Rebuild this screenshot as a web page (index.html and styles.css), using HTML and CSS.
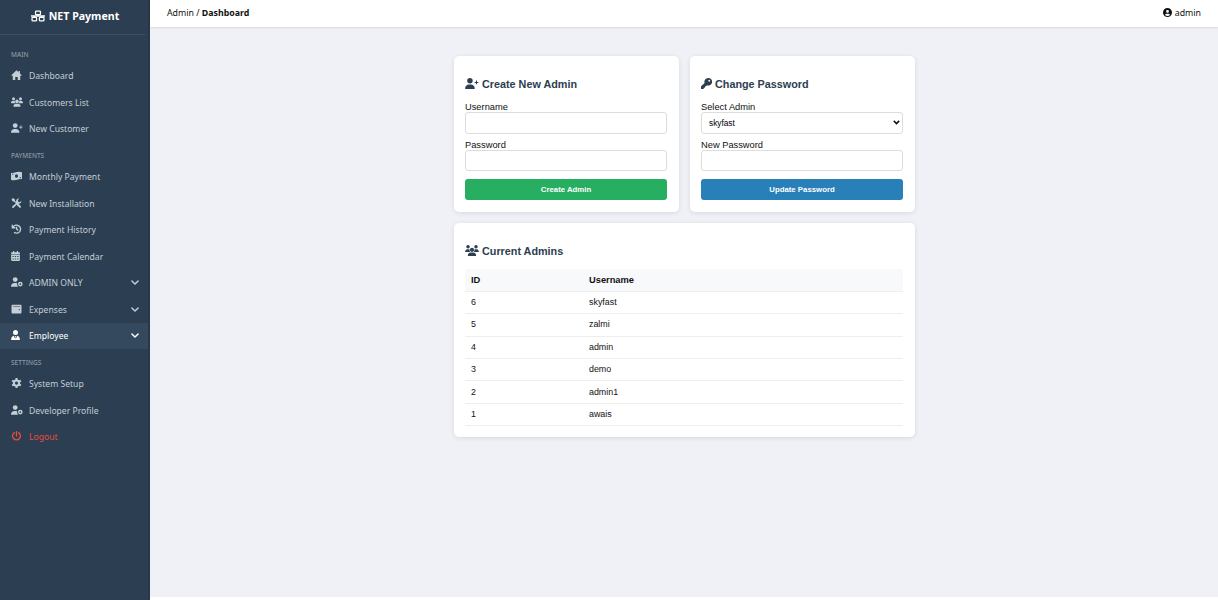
FILE: index.html
```html
<!DOCTYPE html>
<html lang="en">
<head>
  <meta charset="UTF-8">
  <meta name="viewport" content="width=device-width, initial-scale=1.0">
  <title>NET Payment - Admins</title>
  <link rel="stylesheet" href="styles.css">
</head>
<body>
  <svg class="sprite">
    <symbol id="i-network" viewBox="0 0 20 16"><g fill="none" stroke="currentColor" stroke-width="1.8"><rect x="6.500" y="1" width="7" height="5" rx="1"/><rect x="1.500" y="10" width="6.500" height="5" rx="1"/><rect x="12" y="10" width="6.500" height="5" rx="1"/><path d="M10 6v2M0 8h20M4.700 8v2M15.300 8v2"/></g></symbol>
    <symbol id="i-home" viewBox="0 0 16 16"><path d="M8 .5 0 7.800c-.3.600 0 1.200.6 1.200H2v6c0 .6.4 1 1 1h3v-5h4v5h3c.6 0 1-.4 1-1V9h1.400c.6 0 .9-.6.6-1.200L13.500 5.400V1.500h-2.300v1.900z"/></symbol>
    <symbol id="i-users" viewBox="0 0 20 16"><circle cx="4.200" cy="2.500" r="2.500"/><circle cx="15.800" cy="2.500" r="2.500"/><circle cx="10" cy="7" r="3"/><path d="M0 9.400C0 7.400 1.500 6 3.400 6h1.300c.6 0 1.200.1 1.700.4-.2 1.400.2 2.600 1.100 3.600H.6c-.4 0-.6-.2-.6-.6zM20 9.400C20 7.400 18.500 6 16.600 6h-1.300c-.6 0-1.200.1-1.700.4.2 1.400-.2 2.600-1.100 3.600h6.900c.4 0 .6-.2.6-.6zM4 15.200C4 12.900 5.900 11 8.200 11h3.600c2.300 0 4.200 1.900 4.200 4.200 0 .5-.3.8-.8.8H4.800c-.5 0-.8-.3-.8-.8z"/></symbol>
    <symbol id="i-user-plus" viewBox="0 0 20 16"><circle cx="7" cy="4" r="4"/><path d="M0 15.100C0 12 2.500 9.500 5.600 9.500h2.800c3.100 0 5.600 2.500 5.600 5.600 0 .5-.4.900-.9.900H.9c-.5 0-.9-.4-.9-.9zM15.750 9.250v-2h-2v-1.500h2v-2h1.500v2h2v1.500h-2v2z"/></symbol>
    <symbol id="i-money" viewBox="0 0 18 16"><path fill-rule="evenodd" d="M0 2.500c2 1.200 4.500.4 6.500-.2C10 1.200 14 0 18 2v11.500c-2-1.200-4.500-.4-6.500.2C8 14.800 4 16 0 14zM9 5C7.600 5 6.500 6.300 6.500 8S7.600 11 9 11s2.500-1.300 2.500-3S10.400 5 9 5zM2 4.500v2c1.100 0 2-.9 2-2zM16 11.500v-2c-1.100 0-2 .9-2 2z"/></symbol>
    <symbol id="i-tools" viewBox="0 0 16 16"><path d="M2.500 0 0 2.500l2 3h2l3 3-5.800 5c-.9.900-.1 2.500 1.200 2.400.5 0 .8-.2 1.100-.5L8 10.700l4.500 4.600c1.400 1.400 3.600-.8 2.300-2.300l-3.700-3.700c2.900.3 5.200-2.300 4.700-5.100l-2.500 2.400-2.600-.8-.6-2.500L12.500.8C9.500 0 7 2.500 7.500 5.200L7 6 5.500 4.500V2.200z"/></symbol>
    <symbol id="i-history" viewBox="0 0 16 16"><path d="M1.300 1v5h5M2.600 4.800A6.400 6.400 0 1 1 4 13.200M8.200 4.300V8l2.500 2.300" fill="none" stroke="currentColor" stroke-width="2.100"/></symbol>
    <symbol id="i-calendar" viewBox="0 0 14 16"><path fill-rule="evenodd" d="M3 0h2v2h4V0h2v2h1.500c.8 0 1.500.7 1.500 1.500V5H0V3.500C0 2.700.7 2 1.500 2H3zM0 6h14v8.500c0 .8-.7 1.500-1.500 1.500h-11C.7 16 0 15.300 0 14.500zm2.200 1.900v1.500h2V7.900zm3.800 0v1.500h2V7.900zm3.800 0v1.500h2V7.900zM2.200 12v1.500h2V12zM6 12v1.500h2V12zm3.800 0v1.500h2V12z"/></symbol>
    <symbol id="i-user-gear" viewBox="0 0 20 16"><circle cx="7" cy="4" r="4"/><path d="M0 15.100C0 12 2.500 9.500 5.600 9.500h2.800c.7 0 1.300.1 1.900.3-.5 2.300.1 4.600 1.800 6.200H.9c-.5 0-.9-.4-.9-.9z"/><circle cx="15.500" cy="11.500" r="2.700" fill="none" stroke="currentColor" stroke-width="2.400"/></symbol>
    <symbol id="i-wallet" viewBox="0 0 16 16"><path fill-rule="evenodd" d="M2 1h12.500c.8 0 1.500.7 1.500 1.500V13c0 1.100-.9 2-2 2H2c-1.100 0-2-.9-2-2V3c0-1.100.9-2 2-2zm.5 2v.8H14V3zm10 5a1 1 0 1 0 0 2 1 1 0 0 0 0-2z"/></symbol>
    <symbol id="i-user-tie" viewBox="0 0 14 16"><circle cx="7" cy="4" r="4"/><path d="M0 15c0-3 1.800-5.200 4.300-5.700L6.300 14l.4-3-.8-1.500h2.200L7.300 11l.4 3 2-4.700C12.200 9.800 14 12 14 15c0 .6-.4 1-1 1H1c-.6 0-1-.4-1-1z"/></symbol>
    <symbol id="i-gear" viewBox="0 0 16 16"><circle cx="8" cy="8" r="4.200" fill="none" stroke="currentColor" stroke-width="3.200"/><path d="M6.500 0h3l.5 3H6zM6.500 16h3l.5-3H6zM.3 5.300l1.500-2.600 2.900 1.100-2 3.400zM15.700 5.300l-1.500-2.600-2.900 1.100 2 3.400zM.3 10.700l1.500 2.600 2.900-1.100-2-3.400zM15.700 10.700l-1.500 2.600-2.900-1.100 2-3.400z"/></symbol>
    <symbol id="i-power" viewBox="0 0 16 16"><path d="M8 1v7M4.500 2.600a6.300 6.300 0 1 0 7 0" fill="none" stroke="currentColor" stroke-width="2.100" stroke-linecap="round"/></symbol>
    <symbol id="i-chevron" viewBox="0 0 14 16"><path d="m1.500 5.300 5.500 5.500 5.500-5.500" fill="none" stroke="currentColor" stroke-width="2.600" stroke-linecap="round" stroke-linejoin="round"/></symbol>
    <symbol id="i-user-circle" viewBox="0 0 16 16"><path fill-rule="evenodd" d="M8 0a8 8 0 1 0 0 16A8 8 0 0 0 8 0zm0 3.500a2.500 2.500 0 1 1 0 5 2.500 2.500 0 0 1 0-5zM3.600 12.300C4.100 11 5.400 10 7 10h2c1.600 0 2.900 1 3.400 2.300a6.500 6.500 0 0 1-8.800 0z"/></symbol>
    <symbol id="i-key" viewBox="0 0 16 16"><path fill-rule="evenodd" d="M10.500 0a5.500 5.500 0 0 0-5.300 7.100L.2 12.100c-.1.200-.2.400-.2.600v2.500c0 .4.300.8.800.8h2.500c.4 0 .7-.3.700-.8V14h1.200c.4 0 .8-.3.800-.8V12h1.200c.2 0 .4-.1.500-.2l1.200-1.100A5.500 5.500 0 1 0 10.500 0zM12 2.700a1.300 1.300 0 1 1 0 2.600 1.300 1.300 0 0 1 0-2.600z"/></symbol>
  </svg>

  <aside class="sidebar">
    <div class="brand"><svg class="icon wide"><use href="#i-network"/></svg>NET Payment</div>
    <nav class="menu">
      <div class="menu-label">MAIN</div>
      <a class="menu-item"><svg class="icon"><use href="#i-home"/></svg><span>Dashboard</span></a>
      <a class="menu-item"><svg class="icon wide"><use href="#i-users"/></svg><span>Customers List</span></a>
      <a class="menu-item"><svg class="icon wide"><use href="#i-user-plus"/></svg><span>New Customer</span></a>
      <div class="menu-label">PAYMENTS</div>
      <a class="menu-item"><svg class="icon"><use href="#i-money"/></svg><span>Monthly Payment</span></a>
      <a class="menu-item"><svg class="icon"><use href="#i-tools"/></svg><span>New Installation</span></a>
      <a class="menu-item"><svg class="icon"><use href="#i-history"/></svg><span>Payment History</span></a>
      <a class="menu-item"><svg class="icon slim"><use href="#i-calendar"/></svg><span>Payment Calendar</span></a>
      <a class="menu-item"><svg class="icon wide"><use href="#i-user-gear"/></svg><span>ADMIN ONLY</span><svg class="arrow"><use href="#i-chevron"/></svg></a>
      <a class="menu-item"><svg class="icon"><use href="#i-wallet"/></svg><span>Expenses</span><svg class="arrow"><use href="#i-chevron"/></svg></a>
      <a class="menu-item active"><svg class="icon slim"><use href="#i-user-tie"/></svg><span>Employee</span><svg class="arrow"><use href="#i-chevron"/></svg></a>
      <div class="menu-label">SETTINGS</div>
      <a class="menu-item"><svg class="icon"><use href="#i-gear"/></svg><span>System Setup</span></a>
      <a class="menu-item"><svg class="icon wide"><use href="#i-user-gear"/></svg><span>Developer Profile</span></a>
      <a class="menu-item logout"><svg class="icon"><use href="#i-power"/></svg><span>Logout</span></a>
    </nav>
  </aside>

  <div class="main">
    <header class="topbar">
      <div>Admin / <b>Dashboard</b></div>
      <div class="user"><svg class="icon"><use href="#i-user-circle"/></svg>admin</div>
    </header>

    <main class="content">
      <div class="grid">
        <form class="card">
          <h3><svg class="icon wide"><use href="#i-user-plus"/></svg>Create New Admin</h3>
          <label>Username</label>
          <input type="text" name="username">
          <label>Password</label>
          <input type="password" name="password">
          <button type="button" class="btn green">Create Admin</button>
        </form>

        <form class="card">
          <h3><svg class="icon"><use href="#i-key"/></svg>Change Password</h3>
          <label>Select Admin</label>
          <select name="admin">
            <option>skyfast</option>
            <option>zalmi</option>
            <option>admin</option>
            <option>demo</option>
            <option>admin1</option>
            <option>awais</option>
          </select>
          <label>New Password</label>
          <input type="password" name="new_password">
          <button type="button" class="btn blue">Update Password</button>
        </form>

        <div class="card full">
          <h3><svg class="icon wide"><use href="#i-users"/></svg>Current Admins</h3>
          <table>
            <tr><th class="col-id">ID</th><th>Username</th></tr>
            <tr><td>6</td><td>skyfast</td></tr>
            <tr><td>5</td><td>zalmi</td></tr>
            <tr><td>4</td><td>admin</td></tr>
            <tr><td>3</td><td>demo</td></tr>
            <tr><td>2</td><td>admin1</td></tr>
            <tr><td>1</td><td>awais</td></tr>
          </table>
        </div>
      </div>
    </main>
  </div>
</body>
</html>
```

FILE: styles.css
```css
* {
  box-sizing: border-box;
}

body {
  margin: 0;
  height: 600px;
  display: flex;
  overflow: hidden;
  background: #fff;
  color: #111;
  font-family: "Noto Sans", sans-serif;
  font-size: 8.8px;
}

svg {
  fill: currentColor;
}

.sprite {
  display: none;
}

/* Sidebar */
.sidebar {
  width: 150px;
  flex-shrink: 0;
  background: #2c3e52;
  color: #c3ced6;
  border-right: 2px solid #28384a;
  font-size: 8.6px;
}

.brand {
  height: 35px;
  margin-right: 3px;
  padding: 0 0 2px 5px;
  display: flex;
  align-items: center;
  justify-content: center;
  gap: 4px;
  border-bottom: 1px solid #3e5062;
  color: #fff;
  font-size: 10.6px;
  font-weight: 700;
}

.brand .icon {
  width: 14px;
  height: 12px;
}

.menu {
  padding-top: 6px;
}

.menu-label {
  height: 21.5px;
  padding: 9px 11px 0;
  font-size: 6.5px;
  line-height: 10px;
  font-weight: 500;
  color: #8b9aa3;
}

.menu-item {
  height: 26.5px;
  padding: 0 9px 0 11px;
  display: flex;
  align-items: center;
}

.menu-item span {
  flex: 1;
  padding-top: 1px;
}

.menu-item .icon {
  width: 11px;
  height: 10px;
  margin: 0 7px 1px 0;
}

.menu-item .icon.wide {
  width: 12px;
  margin-right: 6px;
}

.menu-item .icon.slim {
  width: 9px;
  margin-right: 9px;
}

.arrow {
  width: 8px;
  height: 9px;
}

.menu-item.active {
  background: #34495e;
  color: #fff;
}

.menu-item.logout {
  color: #e74c3c;
}

/* Top bar */
.main {
  flex: 1;
  display: flex;
  flex-direction: column;
  padding-bottom: 3px;
}

.topbar {
  height: 27px;
  flex-shrink: 0;
  padding: 0 17px 2px;
  display: flex;
  align-items: center;
  justify-content: space-between;
  z-index: 1;
  background: #fff;
  box-shadow: 0 1px 2px rgba(0, 0, 0, 0.1);
}

.user {
  display: flex;
  align-items: center;
  gap: 3px;
}

.user .icon {
  width: 9px;
  height: 9px;
}

/* Content */
.content {
  flex: 1;
  padding-top: 29px;
  background: #f0f1f6;
  font-family: "Liberation Sans", Arial, sans-serif;
  font-size: 9.3px;
}

.grid {
  width: 461px;
  margin: 0 auto;
  display: grid;
  grid-template-columns: 1fr 1fr;
  gap: 11px;
}

.card {
  height: 156px;
  padding: 21px 11.5px 0;
  background: #fff;
  border-radius: 5px;
  box-shadow: 0 1px 5px rgba(0, 0, 0, 0.1);
}

.card.full {
  grid-column: 1 / 3;
  height: 214px;
}

h3 {
  height: 13px;
  margin: 0 0 11px;
  display: flex;
  align-items: center;
  gap: 3px;
  color: #2c3e50;
  font-size: 10.8px;
}

h3 .icon {
  width: 11px;
  height: 11px;
}

h3 .icon.wide {
  width: 14px;
}

label {
  display: block;
  padding-top: 1px;
  line-height: 10px;
}

input,
select {
  display: block;
  width: 100%;
  height: 21.5px;
  margin: 0 0 5px;
  padding: 0 7px;
  background: #fff;
  border: 1px solid #ddd;
  border-radius: 3px;
  font-family: inherit;
  font-size: 8.3px;
}

select {
  appearance: none;
  background: #fff url("data:image/svg+xml,%3Csvg xmlns='http://www.w3.org/2000/svg' viewBox='0 0 7 5'%3E%3Cpath d='M.8 .9l2.700 2.700L6.200 .9' fill='none' stroke='%23111' stroke-width='1.500'/%3E%3C/svg%3E") no-repeat right 2px center / 7px 5px;
}

.btn {
  display: block;
  width: 100%;
  height: 21px;
  margin-top: 8px;
  padding: 0 0 1px;
  border: 0;
  border-radius: 3px;
  color: #fff;
  font-family: inherit;
  font-size: 7.8px;
  font-weight: 700;
}

.green {
  background: #27ae60;
}

.blue {
  background: #2980b9;
}

table {
  width: 100%;
  margin-top: 12px;
  border-collapse: collapse;
}

th,
td {
  height: 22.4px;
  padding: 0 6px;
  text-align: left;
  border-bottom: 1px solid #eee;
}

th {
  background: #f8f9fa;
}

td {
  padding-bottom: 1px;
  font-size: 8.9px;
}

.col-id {
  width: 118px;
}
```
